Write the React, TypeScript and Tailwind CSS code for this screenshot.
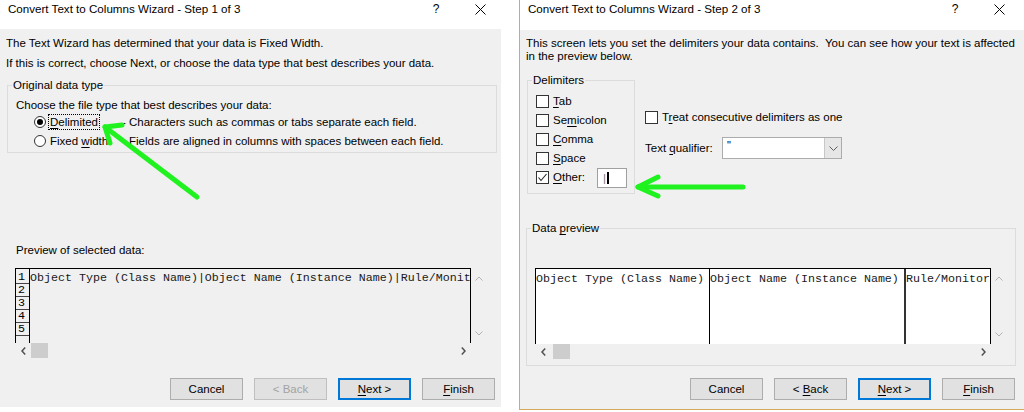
import type { ReactNode } from "react";

const mono = "font-['Liberation_Mono','Courier_New',monospace] text-[11.67px] leading-[13px] whitespace-pre";

function U({ children }: { children: ReactNode }) {
  return <span className="underline decoration-1 underline-offset-2">{children}</span>;
}

function CloseIcon() {
  return (
    <svg width="11" height="11" viewBox="0 0 11 11">
      <path d="M0.5 0.5 L10.5 10.5 M10.5 0.5 L0.5 10.5" stroke="#000" strokeWidth="1" fill="none" />
    </svg>
  );
}

function TitleBar({ title, pr }: { title: string; pr: string }) {
  return (
    <div className={`flex items-center bg-white pl-[8px] ${pr}`}>
      <div className="flex-1 text-[11.6px]">{title}</div>
      <span className="w-[12px] text-center text-[12px]">?</span>
      <span className="ml-[33px] flex">
        <CloseIcon />
      </span>
    </div>
  );
}

function Btn({ children, primary, disabled }: { children: ReactNode; primary?: boolean; disabled?: boolean }) {
  const cls = primary
    ? "border-[#0078d7] shadow-[inset_0_0_0_1px_#0078d7] text-black"
    : disabled
    ? "border-[#bfbfbf] text-[#a3a3a3]"
    : "border-[#adadad] text-black";
  return (
    <div className={`w-[73px] h-[22px] flex items-center justify-center whitespace-pre bg-[#e1e1e1] border ${cls}`}>
      {children}
    </div>
  );
}

function Buttons({ back }: { back: boolean }) {
  return (
    <div className="flex justify-end gap-[11px]">
      <Btn>Cancel</Btn>
      <Btn disabled={!back}>
        {"< "}
        {back ? <U>B</U> : "B"}
        {"ack"}
      </Btn>
      <Btn primary>
        <U>N</U>
        {"ext >"}
      </Btn>
      <Btn>
        <U>F</U>inish
      </Btn>
    </div>
  );
}

function Check({ checked }: { checked?: boolean }) {
  return (
    <span className="w-[13px] h-[13px] border border-[#333] bg-white flex items-center justify-center shrink-0">
      {checked && (
        <svg width="11" height="11" viewBox="0 0 11 11">
          <path d="M1.5 5.5 L4 8.5 L9.5 2" stroke="#222" strokeWidth="1.1" fill="none" />
        </svg>
      )}
    </span>
  );
}

function Radio({ on }: { on?: boolean }) {
  return (
    <span className="w-[12px] h-[12px] rounded-full border border-[#333] bg-white flex items-center justify-center shrink-0">
      {on && <span className="w-[6px] h-[6px] rounded-full bg-black" />}
    </span>
  );
}

function VChevron({ up }: { up?: boolean }) {
  return (
    <svg width="8" height="5" viewBox="0 0 8 5">
      <path d={up ? "M0.5 4.5 L4 1 L7.5 4.5" : "M0.5 0.5 L4 4 L7.5 0.5"} stroke="#b3b3b3" strokeWidth="1" fill="none" />
    </svg>
  );
}

function HChevron({ left }: { left?: boolean }) {
  return (
    <svg width="5" height="8" viewBox="0 0 5 8">
      <path d={left ? "M4.2 0.5 L1 4 L4.2 7.5" : "M0.8 0.5 L4 4 L0.8 7.5"} stroke="#505050" strokeWidth="1.5" fill="none" />
    </svg>
  );
}

function HScroll({ thumbLeft }: { thumbLeft: string }) {
  return (
    <div className="h-[15px] flex items-center">
      <div className="w-[16px] flex justify-center">
        <HChevron left />
      </div>
      <div className={`h-[15px] w-[17px] bg-[#cdcdcd] ${thumbLeft}`} />
      <div className="flex-1" />
      <div className="w-[16px] flex justify-center">
        <HChevron />
      </div>
    </div>
  );
}

function VScroll({ h }: { h: string }) {
  return (
    <div className={`w-[16px] ${h} flex flex-col justify-between items-center pt-[8px] pb-[7px]`}>
      <VChevron up />
      <VChevron />
    </div>
  );
}

function StepOne() {
  return (
    <div className="w-[501px] h-[407px] flex flex-col shrink-0">
      <div className="h-[29px] flex flex-col">
        <TitleBar title="Convert Text to Columns Wizard - Step 1 of 3" pr="pr-[15px]" />
        <div className="flex-1 bg-white" />
      </div>
      <div className="flex-1 bg-[#f0f0f0] pl-[6px] pt-[7px] pr-[6px] leading-[14px]">
        <p>The Text Wizard has determined that your data is Fixed Width.</p>
        <p className="mt-[6px]">If this is correct, choose Next, or choose the data type that best describes your data.</p>

        <fieldset className="mt-[8px] ml-[1px] w-[490px] border border-[#dcdcdc]">
          <legend className="ml-[4px] px-[1px] leading-[14px]">Original data type</legend>
          <div className="pl-[8px] pt-[6px] pb-[2px]">
            <p>Choose the file type that best describes your data:</p>
            <div className="h-[19px] flex items-center pl-[18px]">
              <Radio on />
              <span className="w-[76px] pl-[4px]">
                <span className="outline outline-1 outline-dotted outline-black outline-offset-[1px]">
                  <U>D</U>elimited
                </span>
              </span>
              <span>- Characters such as commas or tabs separate each field.</span>
            </div>
            <div className="h-[19px] flex items-center pl-[18px]">
              <Radio />
              <span className="w-[76px] pl-[4px]">
                Fixed <U>w</U>idth
              </span>
              <span>- Fields are aligned in columns with spaces between each field.</span>
            </div>
          </div>
        </fieldset>

        <p className="mt-[90px] ml-[10px]">Preview of selected data:</p>

        <div className="mt-[11px] ml-[9px] flex">
          <div className="w-[456px]">
            <div className="h-[75px] border-t border-l border-r border-black flex">
              <div className="w-[14px] border-r border-black pt-[2px]">
                {["1", "2", "3", "4", "5"].map((n) => (
                  <div key={n} className={`h-[13px] border-b border-[#444] pl-[2px] ${mono}`}>
                    {n}
                  </div>
                ))}
              </div>
              <div className={`flex-1 overflow-hidden pt-[3px] text-[#1a1a1a] ${mono}`}>
                Object Type (Class Name)|Object Name (Instance Name)|Rule/Monitor
              </div>
            </div>
            <HScroll thumbLeft="" />
          </div>
          <VScroll h="h-[75px]" />
        </div>

        <div className="mt-[20px]">
          <Buttons back={false} />
        </div>
      </div>
    </div>
  );
}

function CheckRow({ checked, children }: { checked?: boolean; children: ReactNode }) {
  return (
    <div className="h-[19px] flex items-center">
      <Check checked={checked} />
      <span className="pl-[4px]">{children}</span>
    </div>
  );
}

function StepTwo() {
  return (
    <div className="w-[505px] h-[410px] ml-[18px] border-l border-b border-[#d4a95e] flex flex-col shrink-0">
      <div className="h-[30px] flex flex-col">
        <TitleBar title="Convert Text to Columns Wizard - Step 2 of 3" pr="pr-[19px]" />
        <div className="flex-1 bg-white" />
      </div>
      <div className="flex-1 bg-[#f0f0f0] pl-[6px] pr-[9px] pt-[7px] leading-[13px]">
        <p className="whitespace-pre">This screen lets you set the delimiters your data contains.  You can see how your text is affected</p>
        <p>in the preview below.</p>

        <div className="mt-[10px] flex">
          <fieldset className="ml-[1px] w-[108px] border border-[#dcdcdc]">
            <legend className="ml-[4px] px-[1px] leading-[14px]">Delimiters</legend>
            <div className="pl-[8px] pt-[5px] pb-[6px]">
              <CheckRow>
                <U>T</U>ab
              </CheckRow>
              <CheckRow>
                Se<U>m</U>icolon
              </CheckRow>
              <CheckRow>
                <U>C</U>omma
              </CheckRow>
              <CheckRow>
                <U>S</U>pace
              </CheckRow>
              <div className="h-[19px] flex items-center">
                <Check checked />
                <span className="pl-[4px] w-[48px]">
                  <U>O</U>ther:
                </span>
                <div className="w-[30px] h-[20px] bg-white border border-[#a0a0a0] flex items-center pl-[5px] gap-[1px]">
                  <span className="text-[#777] leading-[12px]">|</span>
                  <span className="w-[1.5px] h-[12px] bg-black" />
                </div>
              </div>
            </div>
          </fieldset>

          <div className="ml-[10px]">
            <div className="mt-[35px]">
              <CheckRow>
                T<U>r</U>eat consecutive delimiters as one
              </CheckRow>
            </div>
            <div className="mt-[10px] flex items-center">
              <span className="w-[77px]">
                Text <U>q</U>ualifier:
              </span>
              <div className="w-[120px] h-[22px] bg-white border border-[#acacac] flex">
                <span className="flex-1 pl-[4px] pt-[1px] leading-[12px] text-[11px]">"</span>
                <span className="w-[17px] bg-[#e6e6e6] border-l border-[#c8c8c8] flex items-center justify-center">
                  <svg width="9" height="5" viewBox="0 0 9 5">
                    <path d="M0.5 0.5 L4.5 4.5 L8.5 0.5" stroke="#606060" strokeWidth="1" fill="none" />
                  </svg>
                </span>
              </div>
            </div>
          </div>
        </div>

        <fieldset className="mt-[27px] w-[490px] border border-[#dcdcdc]">
          <legend className="ml-[4px] px-[1px] leading-[14px]">
            Data <U>p</U>review
          </legend>
          <div className="pl-[8px] pt-[33px] pb-[6px] flex">
            <div className="w-[456px]">
              <div className={`h-[76px] bg-white border-t border-l border-r border-black flex text-[#1a1a1a] ${mono}`}>
                <div className="w-[174px] border-r-[1.5px] border-black pt-[4px]">Object Type (Class Name)</div>
                <div className="w-[196px] border-r-2 border-[#333] pt-[4px]">Object Name (Instance Name)</div>
                <div className="flex-1 overflow-hidden pt-[4px]">Rule/Monitor</div>
              </div>
              <HScroll thumbLeft="ml-[2px]" />
            </div>
            <VScroll h="h-[76px]" />
          </div>
        </fieldset>

        <div className="mt-[12px]">
          <Buttons back />
        </div>
      </div>
    </div>
  );
}

export default function App() {
  return (
    <div className="relative w-[1024px] h-[412px] bg-white flex overflow-hidden text-black text-[11.5px] font-['Liberation_Sans',Arial,sans-serif]">
      <StepOne />
      <StepTwo />
      <svg className="absolute inset-0 pointer-events-none" width="1024" height="412" viewBox="0 0 1024 412">
        <g stroke="#1ff21f" strokeWidth="5" strokeLinecap="round" strokeLinejoin="round" fill="none">
          <path d="M197 197 L105 127" />
          <path d="M122 125 L105 127 L110 143" />
          <path d="M743 187 L638 187" />
          <path d="M658 177 L638 187 L658 196" />
        </g>
      </svg>
    </div>
  );
}
